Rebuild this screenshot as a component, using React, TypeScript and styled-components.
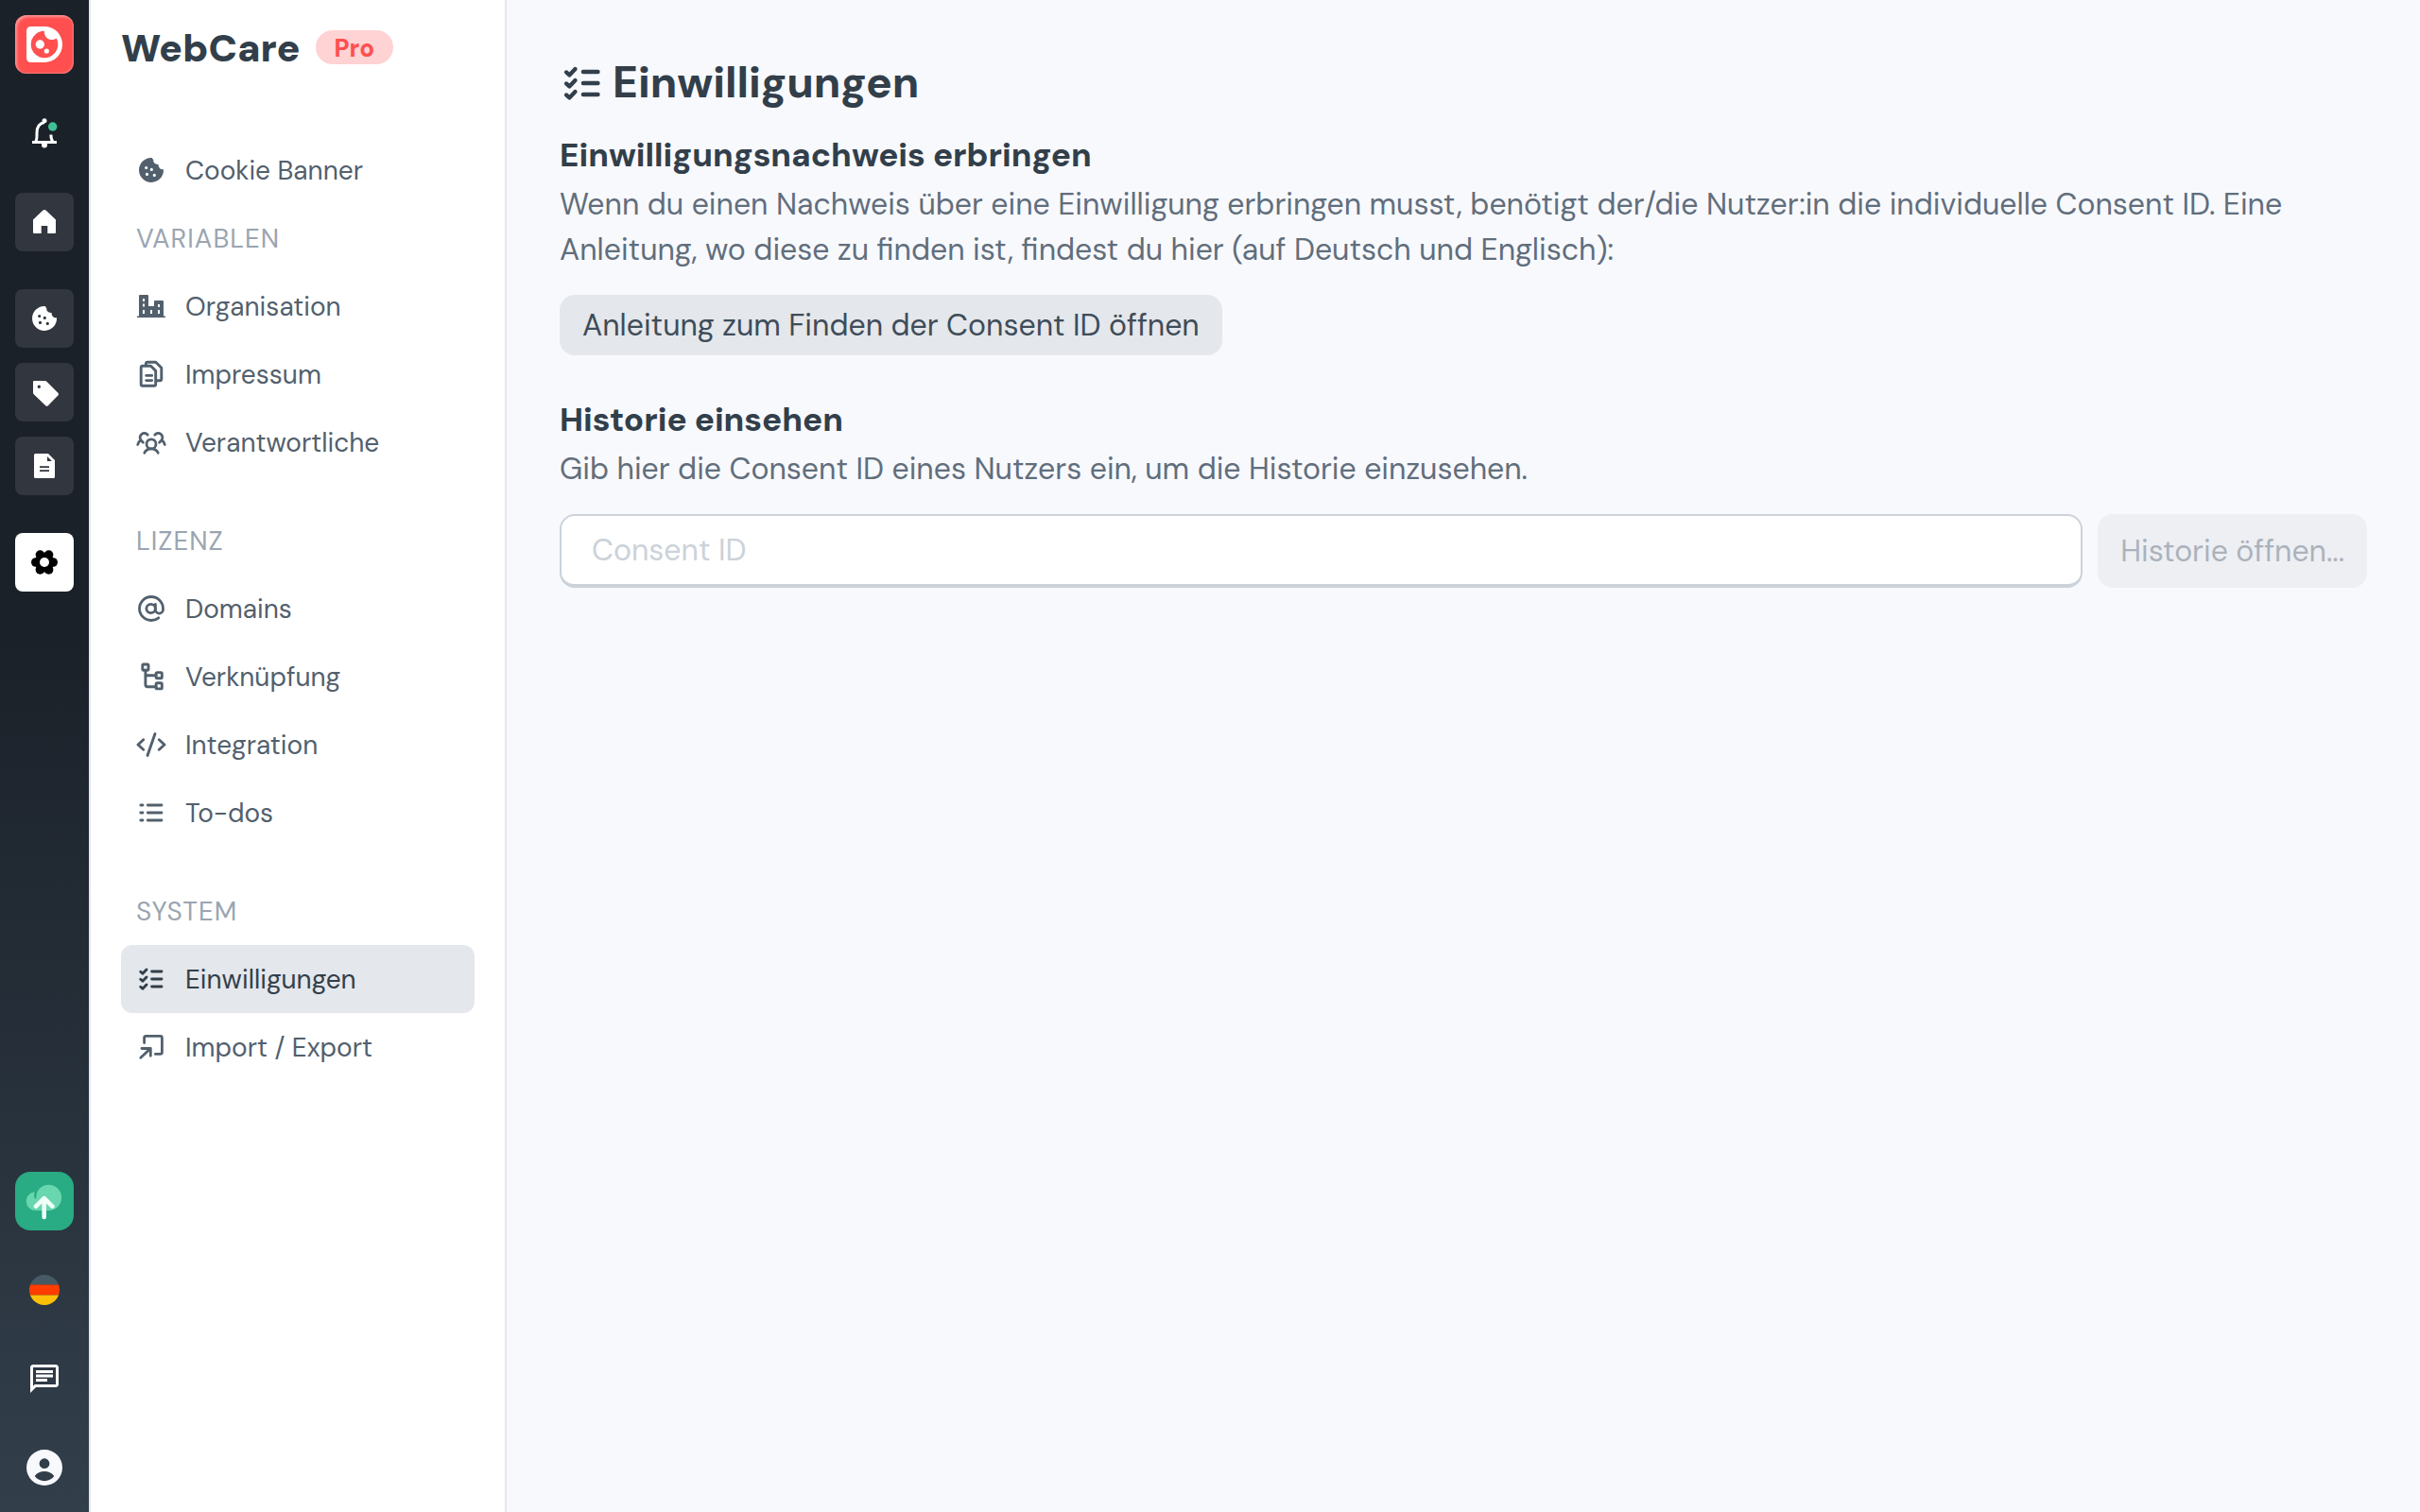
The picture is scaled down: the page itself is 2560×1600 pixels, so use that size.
import React from "react";
import styled, { createGlobalStyle } from "styled-components";

const color = {
  ink: "#323f4b",
  inkSoft: "#3e4c59",
  nav: "#52606d",
  text: "#616e7c",
  label: "#9aa5b1",
  line: "#cbd2d9",
  surface: "#e4e7eb",
  page: "#f8f9fd",
  red: "#ff4f4f",
};

const GlobalStyle = createGlobalStyle`
  *, *::before, *::after { box-sizing: border-box; }
  body {
    margin: 0;
    background: ${color.page};
    color: ${color.text};
    font-family: "DM Sans", Inter, "Liberation Sans", sans-serif;
    font-size: 32px;
    line-height: 48px;
  }
  h1, h2, p, ul { margin: 0; padding: 0; }
  ul { list-style: none; }
  button, input { font: inherit; }
  svg { display: block; flex: none; }
`;

const Shell = styled.div`
  display: flex;
  min-height: 100vh;
`;

const Rail = styled.nav`
  flex: none;
  display: flex;
  flex-direction: column;
  justify-content: space-between;
  padding: 16px;
  border-right: 2px solid ${color.surface};
  background: linear-gradient(180deg, #1b2129 0%, #1b2129 42%, #323f4b 100%);
`;

const RailStack = styled.div<{ $gap: number }>`
  display: flex;
  flex-direction: column;
  gap: ${(p) => p.$gap}px;
`;

type Tone = "plain" | "tile" | "active";

const tileBackground: Record<Tone, string> = {
  plain: "transparent",
  tile: "#32363e",
  active: "#ffffff",
};

const RailButton = styled.button<{ $tone?: Tone }>`
  display: flex;
  align-items: center;
  justify-content: center;
  width: 62px;
  height: 62px;
  padding: 0;
  border: 0;
  border-radius: 8px;
  color: ${(p) => (p.$tone === "active" ? "#000000" : "#ffffff")};
  background: ${(p) => tileBackground[p.$tone ?? "plain"]};
  cursor: pointer;
`;

const BrandButton = styled(RailButton)`
  border-radius: 12px;
  background: ${color.red};
  box-shadow:
    inset 2px 2px 3px rgba(255, 255, 255, 0.4),
    inset -1px -1px 2px rgba(255, 255, 255, 0.25);
`;

const UploadButton = styled(RailButton)`
  border-radius: 16px;
  background: #29ab83;
`;

const Sidebar = styled.aside`
  flex: none;
  width: 440px;
  padding: 20px 32px 32px;
  border-right: 2px solid ${color.surface};
  background: #ffffff;
`;

const SidebarHeader = styled.header`
  display: flex;
  align-items: center;
  gap: 16px;
  height: 60px;
  margin-bottom: 64px;
`;

const ProductName = styled.span`
  padding-top: 2px;
  color: ${color.ink};
  font-size: 41px;
  font-weight: 900;
`;

const PlanBadge = styled.span`
  padding: 2px 20px 0;
  border-radius: 18px;
  background: #ffd2d3;
  color: ${color.red};
  font-size: 26px;
  font-weight: 800;
  line-height: 34px;
`;

const NavGroup = styled.section`
  & + & {
    margin-top: 32px;
  }
`;

const NavLabel = styled.h2`
  padding: 2px 16px 0;
  color: ${color.label};
  font-size: 28px;
  font-weight: 400;
  line-height: 70px;
  letter-spacing: 1px;
  text-transform: uppercase;
`;

const NavLink = styled.a<{ $active?: boolean }>`
  display: flex;
  align-items: center;
  gap: 20px;
  height: 72px;
  padding: 0 16px;
  border-radius: 12px;
  color: ${(p) => (p.$active ? color.ink : color.nav)};
  background: ${(p) => (p.$active ? color.surface : "transparent")};
  font-size: 28px;
  text-decoration: none;
`;

const NavText = styled.span`
  padding-top: 2px;
`;

const Main = styled.main`
  flex: 1;
  min-width: 0;
  padding: 48px 56px;
`;

const PageTitle = styled.h1`
  display: flex;
  align-items: center;
  gap: 8px;
  height: 80px;
  margin-bottom: 8px;
  color: ${color.ink};
  font-size: 46px;
  font-weight: 800;
`;

const PageTitleText = styled.span`
  padding-bottom: 2px;
`;

const Section = styled.section`
  & + & {
    margin-top: 40px;
  }
`;

const SectionTitle = styled.h2`
  color: ${color.ink};
  font-size: 35px;
  font-weight: 800;
  line-height: 56px;
`;

const Copy = styled.p`
  margin-bottom: 24px;
`;

const ActionButton = styled.button`
  padding: 8px 24px;
  border: 0;
  border-radius: 16px;
  background: ${color.surface};
  color: ${color.inkSoft};
  cursor: pointer;

  &:disabled {
    color: ${color.text};
    opacity: 0.5;
    cursor: default;
  }
`;

const SearchForm = styled.form`
  display: flex;
  gap: 16px;
`;

const ConsentInput = styled.input`
  flex: 1;
  min-width: 0;
  height: 78px;
  padding: 0 32px;
  border: 2px solid ${color.line};
  border-bottom-width: 4px;
  border-radius: 16px;
  background: #ffffff;
  color: ${color.ink};
  outline: none;

  &::placeholder {
    color: ${color.line};
    opacity: 1;
  }
`;

type IconProps = { size?: number; stroke?: number; children: React.ReactNode };

const LineIcon = ({ size = 32, stroke = 2, children }: IconProps) => (
  <svg
    width={size}
    height={size}
    viewBox="0 0 32 32"
    fill="none"
    stroke="currentColor"
    strokeWidth={stroke}
    strokeLinecap="round"
    strokeLinejoin="round"
    aria-hidden="true"
  >
    {children}
  </svg>
);

const SolidIcon = ({ size = 32, children }: IconProps) => (
  <svg width={size} height={size} viewBox="0 0 32 32" fill="currentColor" fillRule="evenodd" aria-hidden="true">
    {children}
  </svg>
);

const dot = (x: number, y: number, r: number) =>
  `M${x - r} ${y}a${r} ${r} 0 1 0 ${2 * r} 0a${r} ${r} 0 1 0 ${-2 * r} 0Z`;

const CookieIcon = () => (
  <SolidIcon>
    <path
      d={
        "M17 3A13 13 0 1 0 29 15.2C26.2 15.8 23.4 13.4 23.6 9.9C20.4 10.4 17.4 7.4 18.4 5C17.4 4.4 17 3.8 17 3Z" +
        dot(10.7, 13.5, 1.6) +
        dot(16.3, 15.4, 1.6) +
        dot(11.5, 20.4, 1.6) +
        dot(19.3, 21.4, 1.6)
      }
    />
  </SolidIcon>
);

const BuildingsIcon = () => (
  <SolidIcon>
    <path d="M1 26.4h2V5q0-1 1-1h8q1 0 1 1v11h6v-5q0-1 1-1h8q1 0 1 1v15.400h2V28H1ZM7 8v3h2V8ZM7 13.500v3h2v-3ZM7 20v4h2v-4ZM15 20v4h2v-4ZM23 14v3h2v-3ZM23 20v4h2v-4Z" />
  </SolidIcon>
);

const DocumentsIcon = () => (
  <LineIcon stroke={2.9}>
    <path d="M7 7.200h8.500L20.700 12.400V26.500q0 1.800-1.800 1.800H7q-1.800 0-1.800-1.800V9q0-1.800 1.800-1.800Z" />
    <path d="M10.700 17.400h6M10.700 22.600h6" />
    <path d="M10.400 6.800V5q0-1.800 1.800-1.800h8.600l6 6V21q0 1.800-1.800 1.800h-3.500" />
  </LineIcon>
);

const PeopleIcon = () => (
  <LineIcon stroke={2.8}>
    <circle cx="16" cy="17.900" r="5" />
    <path d="M8.800 27.200C10.200 24.400 13 22.900 16 22.900s5.800 1.500 7.200 4.300" />
    <path d="M12.200 8.200A4 4 0 1 0 5 13.600C3.500 14.600 2.200 16.400 1.700 18.500M5 13.800L7.400 16.200" />
    <path d="M19.800 8.200A4 4 0 1 1 27 13.600C28.500 14.600 29.800 16.400 30.300 18.500M27 13.800L24.600 16.200" />
  </LineIcon>
);

const AtIcon = () => (
  <LineIcon stroke={2.8}>
    <circle cx="15.600" cy="16" r="4.700" />
    <path d="M20.400 11.300V17a4 4 0 0 0 8.100 0V16A12.500 12.500 0 1 0 16 28.500C19 28.500 21.700 27.500 23.800 25.800" />
  </LineIcon>
);

const TreeIcon = () => (
  <LineIcon stroke={2.9}>
    <rect x="6.800" y="3" width="6.200" height="6.200" rx="1.200" />
    <rect x="21.100" y="11.600" width="6.200" height="6.200" rx="1.200" />
    <rect x="21.100" y="22.700" width="6.200" height="6.200" rx="1.200" />
    <path d="M9.900 9.200V24.500q0 2.200 2.200 2.200H21M9.900 14.800H21" />
  </LineIcon>
);

const CodeIcon = () => (
  <LineIcon stroke={2.9}>
    <path d="M7.700 10.800L2 16l5.700 5.200M24.300 10.800L30 16l-5.700 5.200M20 4.600L12 27.400" />
  </LineIcon>
);

const ListIcon = () => (
  <LineIcon stroke={2.8}>
    <path d="M12.300 8H27M12.300 16H27M12.300 24H27M4.800 8H7M4.800 16H7M4.800 24H7" />
  </LineIcon>
);

const ChecklistIcon = ({ size }: { size?: number }) => (
  <LineIcon size={size} stroke={2.9}>
    <path d="M16.600 8H27M16.600 16H27M16.600 24H27" />
    <path d="M4.700 8.300L6.900 10.300L11 6M4.700 16.300L6.900 18.300L11 14M4.700 24.300L6.900 26.300L11 22" />
  </LineIcon>
);

const ImportIcon = () => (
  <LineIcon stroke={2.8}>
    <path d="M8.600 11.500V6.200q0-1.800 1.800-1.800H25.600q1.800 0 1.800 1.800V21.600q0 1.800-1.800 1.800H20.400" />
    <path d="M6 17.500H15.300V25.300M15 17.800L4.800 27.300" />
  </LineIcon>
);

const BrandIcon = () => (
  <svg width="62" height="62" viewBox="0 0 62 62" aria-hidden="true">
    <path fill="#ffffff" d="M17 12H31A19 19 0 0 1 31 50H17Q12 50 12 45V17Q12 12 17 12Z" />
    <circle cx="31" cy="31" r="14.300" fill={color.red} />
    <path fill="#ffffff" d="M31 15.500C30.200 20.500 32.500 25 37.500 26C40 26.400 42.300 25.800 45 23.500L44 17L36 14Z" />
    <circle cx="26.300" cy="31" r="4.700" fill="#ffffff" />
    <circle cx="33.300" cy="38" r="2.600" fill="#ffffff" />
  </svg>
);

const BellIcon = () => (
  <svg width="32" height="32" viewBox="0 0 32 32" aria-hidden="true">
    <g fill="none" stroke="#ffffff" strokeWidth="3">
      <path d="M6.500 25C8.300 23 8 20 8 15.500C8 9.500 11 5.500 16 4.500" />
      <path d="M22.900 17.500C22.900 20.500 23.200 23 24.800 25" />
      <path d="M3 25.500H29" />
    </g>
    <circle cx="16" cy="2.800" r="2.500" fill="#ffffff" />
    <path fill="#ffffff" d="M13 27H19V28.600A3 3 0 0 1 13 28.600Z" />
    <circle cx="24.700" cy="9" r="4.700" fill="#40bf95" />
  </svg>
);

const HomeIcon = () => (
  <SolidIcon>
    <path d="M4 13.500L14.200 3.800Q16 2.300 17.800 3.800L28 13.500V27q0 1-1 1H19.300V20H12.700v8H5q-1 0-1-1Z" />
  </SolidIcon>
);

const TagIcon = () => (
  <SolidIcon>
    <path
      d={
        "M5 4H16.500Q17.600 4 18.400 4.800L30.600 17Q31.600 18.200 30.600 19.300L19.800 30.200Q18.500 31.400 17.300 30.200L5 18.400Q4 17.500 4 16.400V5Q4 4 5 4Z" +
        dot(10.3, 10.3, 1.7)
      }
    />
  </SolidIcon>
);

const PageIcon = () => (
  <SolidIcon>
    <path d="M6.500 3H20L27 10V27.500Q27 29 25.500 29H6.500Q5 29 5 27.500V4.500Q5 3 6.500 3ZM19 6V11H24ZM11 16.200V18.100H21V16.200ZM11 20.200V22.100H21V20.200Z" />
  </SolidIcon>
);

const gearLobes = [0, 60, 120, 180, 240, 300].map((deg) => {
  const a = (deg * Math.PI) / 180;
  return { deg, x: 16 + 9.2 * Math.cos(a), y: 16 + 9.2 * Math.sin(a) };
});

const GearIcon = () => (
  <svg width="32" height="32" viewBox="0 0 32 32" aria-hidden="true">
    {gearLobes.map((lobe) => (
      <circle key={lobe.deg} cx={lobe.x} cy={lobe.y} r="4.800" fill="currentColor" />
    ))}
    <circle cx="16" cy="16" r="10.400" fill="currentColor" />
    <circle cx="16" cy="16" r="5" fill="#ffffff" />
  </svg>
);

const UploadIcon = () => (
  <svg width="62" height="62" viewBox="0 0 62 62" aria-hidden="true">
    <path
      fill="#68d6ae"
      d="M20.700 21.200C20 23.500 20 25.800 20.600 28.500L22.400 28C21.800 20 27.500 13.700 35.500 13.700A13.600 13.600 0 0 1 35.500 41H22.500A9.900 9.900 0 0 1 20.700 21.200Z"
    />
    <path
      d="M30.700 48V29M22 36.600L30.700 28L39.400 36.600"
      fill="none"
      stroke="#effff8"
      strokeWidth="4.600"
      strokeLinecap="round"
      strokeLinejoin="round"
    />
  </svg>
);

const GermanFlagIcon = () => (
  <svg width="32" height="32" viewBox="0 0 32 32" aria-hidden="true">
    <clipPath id="flag-disc">
      <circle cx="16" cy="16" r="16" />
    </clipPath>
    <g clipPath="url(#flag-disc)">
      <path fill="#455a64" d="M0 0H32V10.500H0Z" />
      <path fill="#ff3d00" d="M0 10.500H32V21.500H0Z" />
      <path fill="#ffc107" d="M0 21.500H32V32H0Z" />
    </g>
  </svg>
);

const ChatIcon = () => (
  <svg width="36" height="36" viewBox="0 0 24 24" fill="currentColor" aria-hidden="true">
    <path d="M4 4h16v12H5.170L4 17.170V4m0-2c-1.100 0-2 .9-2 2v18l4-4h14c1.100 0 2-.9 2-2V4c0-1.100-.9-2-2-2H4zm2 10h8v2H6v-2zm0-3h12v2H6V9zm0-3h12v2H6V6z" />
  </svg>
);

const AccountIcon = () => (
  <svg width="38" height="38" viewBox="0 0 38 38" fill={color.page} fillRule="evenodd" aria-hidden="true">
    <path
      d={
        dot(19, 19, 19) +
        dot(19, 14.7, 5.4) +
        "M8.700 28C11 24.600 15 22.900 19 22.900S27 24.600 29.300 28C27 31.300 23 33.200 19 33.200S11 31.300 8.700 28Z"
      }
    />
  </svg>
);

type NavEntry = { label: string; icon: React.ReactNode; active?: boolean };
type NavSection = { title?: string; items: NavEntry[] };

const navigation: NavSection[][] = [
  [
    { items: [{ label: "Cookie Banner", icon: <CookieIcon /> }] },
    {
      title: "Variablen",
      items: [
        { label: "Organisation", icon: <BuildingsIcon /> },
        { label: "Impressum", icon: <DocumentsIcon /> },
        { label: "Verantwortliche", icon: <PeopleIcon /> },
      ],
    },
  ],
  [
    {
      title: "Lizenz",
      items: [
        { label: "Domains", icon: <AtIcon /> },
        { label: "Verknüpfung", icon: <TreeIcon /> },
        { label: "Integration", icon: <CodeIcon /> },
        { label: "To-dos", icon: <ListIcon /> },
      ],
    },
  ],
  [
    {
      title: "System",
      items: [
        { label: "Einwilligungen", icon: <ChecklistIcon />, active: true },
        { label: "Import / Export", icon: <ImportIcon /> },
      ],
    },
  ],
];

export default function App() {
  return (
    <>
      <GlobalStyle />
      <Shell>
        <Rail aria-label="Module">
          <RailStack $gap={40}>
            <RailStack $gap={32}>
              <BrandButton aria-label="WebCare">
                <BrandIcon />
              </BrandButton>
              <RailButton aria-label="Benachrichtigungen">
                <BellIcon />
              </RailButton>
              <RailButton $tone="tile" aria-label="Start">
                <HomeIcon />
              </RailButton>
            </RailStack>
            <RailStack $gap={16}>
              <RailButton $tone="tile" aria-label="Cookies">
                <CookieIcon />
              </RailButton>
              <RailButton $tone="tile" aria-label="Tags">
                <TagIcon />
              </RailButton>
              <RailButton $tone="tile" aria-label="Dokumente">
                <PageIcon />
              </RailButton>
            </RailStack>
            <RailButton $tone="active" aria-label="Einstellungen">
              <GearIcon />
            </RailButton>
          </RailStack>
          <RailStack $gap={32}>
            <UploadButton aria-label="Veröffentlichen">
              <UploadIcon />
            </UploadButton>
            <RailButton aria-label="Sprache">
              <GermanFlagIcon />
            </RailButton>
            <RailButton aria-label="Chat">
              <ChatIcon />
            </RailButton>
            <RailButton aria-label="Konto">
              <AccountIcon />
            </RailButton>
          </RailStack>
        </Rail>

        <Sidebar>
          <SidebarHeader>
            <ProductName>WebCare</ProductName>
            <PlanBadge>Pro</PlanBadge>
          </SidebarHeader>
          <nav aria-label="WebCare">
            {navigation.map((group, index) => (
              <NavGroup key={index}>
                {group.map((section, sectionIndex) => (
                  <React.Fragment key={sectionIndex}>
                    {section.title && <NavLabel>{section.title}</NavLabel>}
                    <ul>
                      {section.items.map((item) => (
                        <li key={item.label}>
                          <NavLink href="#" $active={item.active} aria-current={item.active ? "page" : undefined}>
                            {item.icon}
                            <NavText>{item.label}</NavText>
                          </NavLink>
                        </li>
                      ))}
                    </ul>
                  </React.Fragment>
                ))}
              </NavGroup>
            ))}
          </nav>
        </Sidebar>

        <Main>
          <PageTitle>
            <ChecklistIcon size={48} />
            <PageTitleText>Einwilligungen</PageTitleText>
          </PageTitle>
          <Section>
            <SectionTitle>Einwilligungsnachweis erbringen</SectionTitle>
            <Copy>
              Wenn du einen Nachweis über eine Einwilligung erbringen musst, benötigt der/die Nutzer:in die
              individuelle Consent ID. Eine Anleitung, wo diese zu finden ist, findest du hier (auf Deutsch und
              Englisch):
            </Copy>
            <ActionButton type="button">Anleitung zum Finden der Consent ID öffnen</ActionButton>
          </Section>
          <Section>
            <SectionTitle>Historie einsehen</SectionTitle>
            <Copy>Gib hier die Consent ID eines Nutzers ein, um die Historie einzusehen.</Copy>
            <SearchForm onSubmit={(event) => event.preventDefault()}>
              <ConsentInput type="text" placeholder="Consent ID" aria-label="Consent ID" />
              <ActionButton type="submit" disabled>
                Historie öffnen...
              </ActionButton>
            </SearchForm>
          </Section>
        </Main>
      </Shell>
    </>
  );
}
